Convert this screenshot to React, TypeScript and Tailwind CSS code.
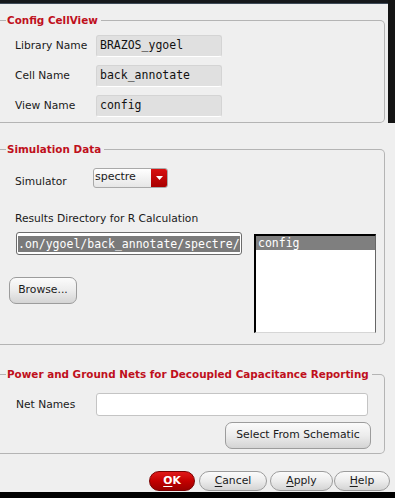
import type { ReactNode } from 'react'

const SANS = { fontFamily: '"DejaVu Sans", "Liberation Sans", sans-serif' }
const MONO = { fontFamily: '"DejaVu Sans Mono", "Liberation Mono", monospace' }

function Group({ title, className, children }: { title: string; className?: string; children: ReactNode }) {
  return (
    <fieldset className={`border border-l-0 border-[#b4b4b4] rounded-r-[5px] p-0 min-w-0 ${className ?? ''}`}>
      <legend className="ml-[6px] pl-[1px] pr-[3px] text-[10.4px] leading-[14px] font-bold text-[#bf101c]">
        {title}
      </legend>
      {children}
    </fieldset>
  )
}

function ReadField({ value }: { value: string }) {
  return (
    <div
      className="w-[126px] h-[22px] flex items-center pl-[3px] rounded-[3px] bg-[#e0e0e0] border border-[#d4d4d4] border-b-white text-[11.5px] text-[#111]"
      style={MONO}
    >
      {value}
    </div>
  )
}

function Btn({ children, className }: { children: ReactNode; className?: string }) {
  return (
    <button
      className={`flex items-center justify-center border border-[#9c9c9c] bg-gradient-to-b from-[#fbfbfb] via-[#ececec] to-[#d4d4d4] text-[10.8px] text-[#1a1a1a] ${className ?? ''}`}
    >
      {children}
    </button>
  )
}

export default function App() {
  return (
    <div className="w-[395px] h-[498px] bg-[#efefef] flex flex-col overflow-hidden text-[#1a1a1a]" style={SANS}>
      <div className="flex">
        <div className="flex-1 flex flex-col">
          {/* window title strip */}
          <div className="h-[4px] bg-[#16181c] border-b border-[#3e4a58]" />

          {/* ── Config CellView ─────────────────────────── */}
          <Group title="Config CellView" className="mt-[9px] mr-[3px]">
            <div className="pt-[8px] pb-[5px] pl-[15px] flex flex-col gap-[8px] text-[10.7px]">
              {[
                ['Library Name', 'BRAZOS_ygoel'],
                ['Cell Name', 'back_annotate'],
                ['View Name', 'config'],
              ].map(([label, value]) => (
                <div key={label} className="flex items-center">
                  <span className="w-[81px]">{label}</span>
                  <ReadField value={value} />
                </div>
              ))}
            </div>
          </Group>
        </div>
        {/* dark edge of the window behind */}
        <div className="w-[7px] bg-[#141414]" />
      </div>

      {/* ── Simulation Data ─────────────────────────── */}
      <Group title="Simulation Data" className="mt-[19px] mr-[10px]">
        <div className="pt-[12px] pb-[11px] pl-[9px] text-[10.7px]">
          <div className="flex items-start">
            <span className="w-[84px] pl-[6px] mt-[6px]">Simulator</span>
            <div className="w-[75px] h-[20px] flex rounded-[3px] border border-[#a9a9a9] bg-gradient-to-b from-white to-[#e6e6e6] overflow-hidden">
              <span className="flex-1 pl-[1px] leading-[16px] text-[11px]">spectre</span>
              <span className="w-[16px] flex items-center justify-center bg-gradient-to-b from-[#d81010] to-[#a80000]">
                <svg width="7" height="4" viewBox="0 0 7 4">
                  <path d="M0 0h7L3.5 4z" fill="#fff" />
                </svg>
              </span>
            </div>
          </div>

          <div className="pl-[6px] mt-[22px] leading-[14px]">Results Directory for R Calculation</div>

          <div className="flex items-start mt-[6px]">
            <div className="w-[233px] flex flex-col">
              <div className="ml-[7px] w-[226px] h-[23px] flex items-center pl-[1px] bg-white border border-[#6c6c6c] rounded-[3px] overflow-hidden whitespace-nowrap">
                <span className="bg-[#7a7a7a] text-white text-[11.5px] leading-[16px]" style={MONO}>
                  .on/ygoel/back_annotate/spectre/
                </span>
                <span className="w-px h-[15px] bg-black ml-[1px]" />
              </div>
              <Btn className="mt-[22px] w-[68px] h-[27px] rounded-[7px]">Browse...</Btn>
            </div>
            <div className="ml-[12px] mt-[2px] w-[122px] h-[99px] bg-white border-t-2 border-l-2 border-black border-r border-b border-r-[#666] border-b-[#d6d6d6]">
              <div className="h-[14px] bg-[#7f7f7f] text-white text-[11.5px] leading-[14px] pl-[2px]" style={MONO}>
                config
              </div>
            </div>
          </div>
        </div>
      </Group>

      {/* ── Power and Ground Nets ───────────────────── */}
      <Group title="Power and Ground Nets for Decoupled Capacitance Reporting" className="mt-[22px] mr-[10px]">
        <div className="pt-[12px] pb-[4px] pl-[16px] flex flex-col text-[10.7px]">
          <div className="flex items-center">
            <span className="w-[80px]">Net Names</span>
            <div className="w-[272px] h-[23px] bg-white border border-[#c4c4c4] rounded-[3px]" />
          </div>
          <Btn className="self-end mr-[13px] mt-[6px] w-[146px] h-[27px] rounded-[7px]">Select From Schematic</Btn>
        </div>
      </Group>

      {/* ── Dialog buttons ──────────────────────────── */}
      <div className="flex justify-end items-center mt-[17px] pr-[5px] text-[10.8px]">
        <button className="w-[46px] h-[20px] rounded-full border border-[#7a0000] bg-gradient-to-b from-[#e01818] via-[#c40000] to-[#9a0000] text-white font-bold">
          <span className="underline underline-offset-2">O</span>K
        </button>
        <Btn className="ml-[4px] w-[68px] h-[20px] rounded-full">
          <span className="underline underline-offset-2">C</span>ancel
        </Btn>
        <Btn className="ml-[3px] w-[63px] h-[20px] rounded-full">
          <span className="underline underline-offset-2">A</span>pply
        </Btn>
        <Btn className="ml-[1px] w-[56px] h-[20px] rounded-full">
          <span className="underline underline-offset-2">H</span>elp
        </Btn>
      </div>

      <div className="flex-1" />
      <div className="h-[6px] bg-black" />
    </div>
  )
}
